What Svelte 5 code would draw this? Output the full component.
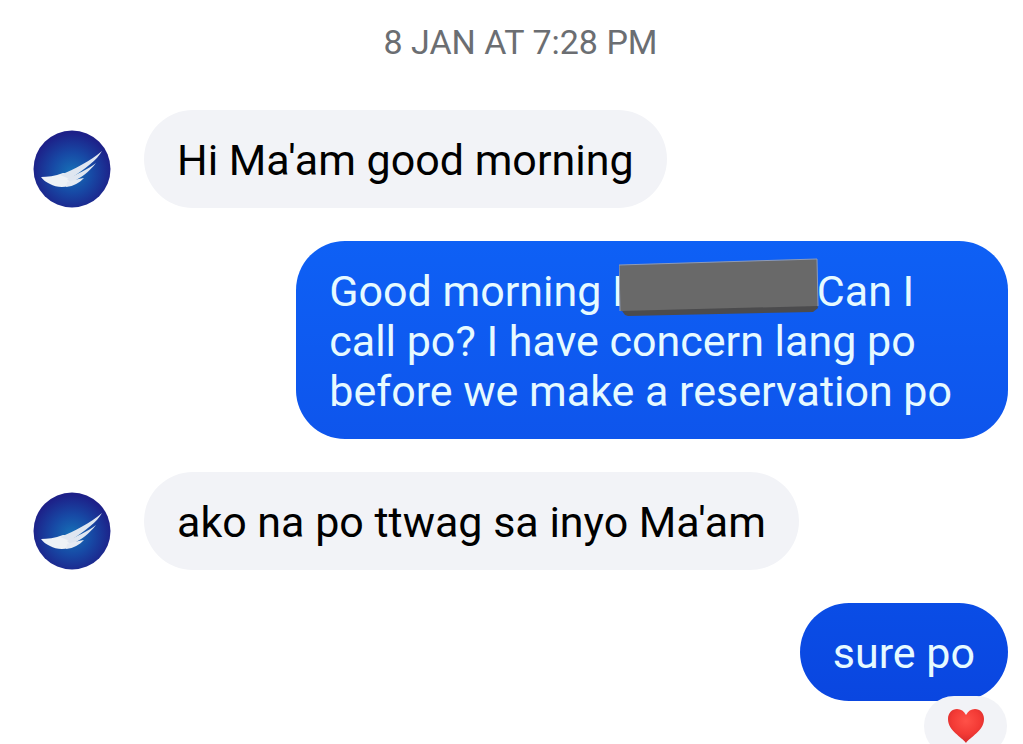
<script>
	const messages = [
		{ from: 'them', text: "Hi Ma'am good morning" },
		{
			from: 'me',
			tone: 'light',
			text: 'Good morning I',
			after: 'Can I call po? I have concern lang po before we make a reservation po'
		},
		{ from: 'them', text: "ako na po ttwag sa inyo Ma'am" },
		{ from: 'me', tone: 'deep', text: 'sure po', reaction: true }
	];
</script>

{#snippet avatar()}
	<svg class="avatar" viewBox="0 0 78 78" role="img" aria-label="Profile picture">
		<defs>
			<radialGradient id="sky" cx="50%" cy="55%" r="52%">
				<stop offset="0" stop-color="#1672b8" />
				<stop offset="0.5" stop-color="#1749a5" />
				<stop offset="1" stop-color="#1d2088" />
			</radialGradient>
		</defs>
		<circle cx="39" cy="39" r="38.5" fill="url(#sky)" />
		<!-- wing body, then the three feathers -->
		<path
			fill="#eef2f6"
			d="M8 47 C14 47 22 46 30 43 C34 43 37 45 39 48 C41 51 39 54 35 56 C30 58 22 57 17 54 C13 52 10 50 8 47 Z"
		/>
		<path fill="#dfe6f0" d="M27 45 C42 39 57 31 69 21 C64 30 53 38 37 49 Z" />
		<path fill="#dfe6f0" d="M34 49 C44 44 54 40 63 33 C56 42 49 47 38 53 Z" />
		<path fill="#e6ebf3" d="M34 52 C40 50 45 49 51 48 C46 53 41 56 33 57 Z" />
	</svg>
{/snippet}

<main class="thread">
	<time class="stamp">8 JAN AT 7:28 PM</time>

	{#each messages as message}
		<div class="row {message.from}">
			{#if message.from === 'them'}
				{@render avatar()}
			{/if}
			<div class="bubble {message.tone ?? ''}">
				{message.text}{#if message.after}<span class="redacted"
						><svg viewBox="0 0 200 58" aria-hidden="true">
							<path fill="#4b4b4d" d="M1 50 L198 46 L199 50 L194 54 L9 58 L6 57 Z" />
							<path fill="#696969" d="M0 7 L198 1 L199 48 L1 53 Z" />
							<path fill="none" stroke="#8d9bb8" d="M1 53 L0 7 L198 1 L199 48" />
						</svg></span
					>{message.after}{/if}
				{#if message.reaction}
					<button class="reaction" aria-label="Love reaction">
						<svg viewBox="0 0 36 34" aria-hidden="true">
							<defs>
								<radialGradient id="love" cx="50%" cy="35%" r="65%">
									<stop offset="0" stop-color="#ff5148" />
									<stop offset="0.6" stop-color="#f33a35" />
									<stop offset="1" stop-color="#d32a2c" />
								</radialGradient>
							</defs>
							<path
								fill="url(#love)"
								d="M18 34 C14 28 0 22 0 10 C0 4 4 0 9 0 C13 0 16 2 18 6 C20 2 23 0 27 0 C32 0 36 4 36 10 C36 22 22 28 18 34 Z"
							/>
						</svg>
					</button>
				{/if}
			</div>
		</div>
	{/each}
</main>

<style>
	:global(body) {
		background: #fff;
	}

	.thread {
		display: flex;
		flex-direction: column;
		gap: 33px;
		box-sizing: border-box;
		min-height: 100vh;
		padding: 20px 15px 0 33px;
		overflow: hidden;
		font-family: Roboto, 'Noto Sans', sans-serif;
		font-size: 43px;
		line-height: 50px;
	}

	.stamp {
		margin-bottom: 13px;
		text-align: center;
		font-size: 34px;
		line-height: 44px;
		color: #6b6e72;
	}

	.row {
		display: flex;
		align-items: flex-end;
		gap: 33px;
	}

	.me {
		justify-content: flex-end;
	}

	.avatar {
		flex: none;
		width: 78px;
		height: 78px;
	}

	.bubble {
		position: relative;
		box-sizing: border-box;
		max-width: 73%;
		padding: 25px 33px 23px;
		border-radius: 49px;
		background: #f2f3f7;
		color: #000;
	}

	.light {
		background: linear-gradient(#0e60f5, #0e55ec);
		color: #e6faff;
	}

	.deep {
		background: linear-gradient(#0a4de6, #0a46e0);
		color: #e6faff;
	}

	/* keeps the line height, the block spills over it */
	.redacted {
		display: inline-block;
		position: relative;
		width: 200px;
		height: 30px;
		margin: 0 -2px 0 -5px;
	}

	.redacted svg {
		position: absolute;
		left: 0;
		bottom: -10px;
		width: 200px;
		height: 58px;
	}

	.reaction {
		position: absolute;
		top: 93px;
		right: 1px;
		display: flex;
		justify-content: center;
		align-items: flex-start;
		width: 83px;
		height: 60px;
		padding: 13px 0 0;
		border: 0;
		border-radius: 30px;
		background: #f2f3f7;
	}

	.reaction svg {
		flex: none;
		width: 36px;
		height: 34px;
	}
</style>
